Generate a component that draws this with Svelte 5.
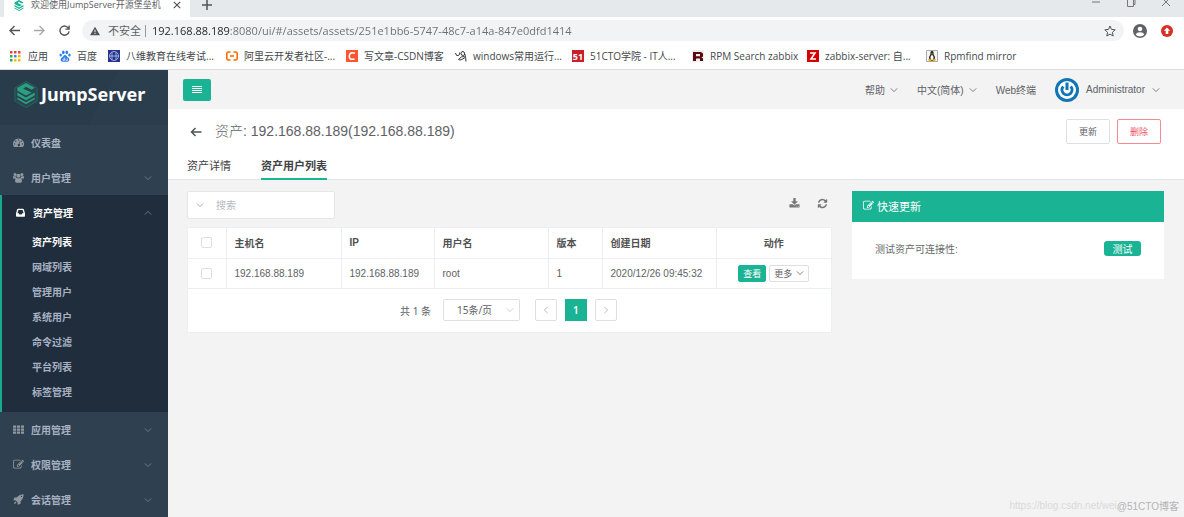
<script lang="ts">
    const address =
        "192.168.88.189:8080/ui/#/assets/assets/251e1bb6-5747-48c7-a14a-847e0dfd1414";

    const bookmarks = [
        { icon: "apps", label: "应用" },
        { icon: "baidu", label: "百度" },
        { icon: "school", label: "八维教育在线考试..." },
        { icon: "aliyun", label: "阿里云开发者社区-..." },
        { icon: "csdn", label: "写文章-CSDN博客" },
        { icon: "scribble", label: "windows常用运行..." },
        { icon: "cto", label: "51CTO学院 - IT人..." },
        { icon: "rpm", label: "RPM Search zabbix" },
        { icon: "zabbix", label: "zabbix-server: 自..." },
        { icon: "tux", label: "Rpmfind mirror" },
    ];

    const menu = [
        { icon: "dashboard", label: "仪表盘" },
        { icon: "users", label: "用户管理", expandable: true },
        {
            icon: "inbox",
            label: "资产管理",
            expandable: true,
            children: [
                "资产列表",
                "网域列表",
                "管理用户",
                "系统用户",
                "命令过滤",
                "平台列表",
                "标签管理",
            ],
        },
        { icon: "grid", label: "应用管理", expandable: true },
        { icon: "edit", label: "权限管理", expandable: true },
        { icon: "rocket", label: "会话管理", expandable: true },
    ];

    const assetUsers = [
        {
            hostname: "192.168.88.189",
            ip: "192.168.88.189",
            username: "root",
            version: 1,
            created: "2020/12/26 09:45:32",
        },
    ];

    let activeChild = $state("资产列表");
    let search = $state("");
    let pageSize = $state("15");
    let url = $state(address);
</script>

{#snippet chevron(dir: string)}
    <svg class="chevron {dir}" viewBox="0 0 10 10" aria-hidden="true">
        <path d="M1 3l4 4 4-4" />
    </svg>
{/snippet}

{#snippet layers()}
    <path d="M3 7l9-5 9 5-3 2-6-3-3 2 9 4-6 3-9-5z" />
    <path d="M3 12l9 5 9-5v3l-9 5-9-5z" />
    <path d="M3 17l9 5 9-5v2l-9 5-9-5z" />
{/snippet}

{#snippet icon(name: string)}
    {#if name === "edit"}
        <svg class="icon" viewBox="0 0 1792 1792" aria-hidden="true">
            <path
                d="M888 1184l116-116-152-152-116 116v56h96v96h56zm440-720q-16-16-33 1l-350 350q-17 17-1 33t33-1l350-350q17-17 1-33zm80 594v190q0 119-84.5 203.5t-203.5 84.5h-832q-119 0-203.5-84.5t-84.5-203.5v-832q0-119 84.5-203.5t203.5-84.5h832q63 0 117 25 15 7 18 23 3 17-9 29l-49 49q-14 14-32 8-23-6-45-6h-832q-66 0-113 47t-47 113v832q0 66 47 113t113 47h832q66 0 113-47t47-113v-126q0-13 9-22l64-64q15-15 35-7t20 29zm-96-738l288 288-672 672h-288v-288zm444 132l-92 92-288-288 92-92q28-28 68-28t68 28l152 152q28 28 28 68t-28 68z"
            />
        </svg>
    {:else if name === "refresh"}
        <svg class="icon" viewBox="0 0 1792 1792" aria-hidden="true">
            <path
                d="M1639 1056q0 5-1 7-64 268-268 434.5t-478 166.5q-146 0-282.5-55t-243.5-157l-129 129q-19 19-45 19t-45-19-19-45v-448q0-26 19-45t45-19h448q26 0 45 19t19 45-19 45l-137 137q71 66 161 102t187 36q134 0 250-65t186-179q11-17 53-117 8-23 30-23h192q13 0 22.5 9.5t9.5 22.5zm25-800v448q0 26-19 45t-45 19h-448q-26 0-45-19t-19-45 19-45l138-138q-148-137-349-137-134 0-250 65t-186 179q-11 17-53 117-8 23-30 23h-199q-13 0-22.5-9.5t-9.5-22.5v-7q65-268 270-434.5t480-166.5q146 0 284 55.5t245 156.5l130-129q19-19 45-19t45 19 19 45z"
            />
        </svg>
    {:else if name === "download"}
        <svg class="icon" viewBox="0 0 1792 1792" aria-hidden="true">
            <path
                d="M1344 1344q0-26-19-45t-45-19-45 19-19 45 19 45 45 19 45-19 19-45zm256 0q0-26-19-45t-45-19-45 19-19 45 19 45 45 19 45-19 19-45zm128-224v320q0 40-28 68t-68 28h-1472q-40 0-68-28t-28-68v-320q0-40 28-68t68-28h465l135 136q58 56 136 56t136-56l136-136h464q40 0 68 28t28 68zm-325-569q17 41-14 70l-448 448q-18 19-45 19t-45-19l-448-448q-31-29-14-70 17-39 59-39h256v-448q0-26 19-45t45-19h256q26 0 45 19t19 45v448h256q42 0 59 39z"
            />
        </svg>
    {:else if name === "dashboard"}
        <svg class="icon" viewBox="0 0 16 16" aria-hidden="true">
            <path
                fill-rule="evenodd"
                d="M8 2a8 8 0 0 0-6.800 12.200q.3.300.700.300h12.200q.4 0 .7-.3A8 8 0 0 0 8 2zM8 3.200a1 1 0 1 1 0 2 1 1 0 0 1 0-2zM4 5a1 1 0 1 1 0 2 1 1 0 0 1 0-2zM12 5a1 1 0 1 1 0 2 1 1 0 0 1 0-2zM2.300 9a1 1 0 1 1 0 2 1 1 0 0 1 0-2zM13.700 9a1 1 0 1 1 0 2 1 1 0 0 1 0-2zM9.300 6.400l.9.300-1 3.500a1.700 1.700 0 1 1-.9-.2z"
            />
        </svg>
    {:else if name === "users"}
        <svg class="icon" viewBox="0 0 16 16" aria-hidden="true">
            <circle cx="3" cy="3.500" r="2.200" />
            <circle cx="13" cy="3.500" r="2.200" />
            <circle cx="8" cy="5.500" r="3" />
            <path
                d="M0 9.500V7.500q0-2 1.500-1.500L4.500 6.500Q4 8 5 9.500zM16 9.500V7.500q0-2-1.500-1.500l-3 .5Q12 8 11 9.500zM3 13.500q0-5 2.500-5Q8 10.500 10.500 8.500 13 8.500 13 13.500q0 2-2 2H5q-2 0-2-2z"
            />
        </svg>
    {:else if name === "inbox"}
        <svg class="icon" viewBox="0 0 16 16" aria-hidden="true">
            <path
                fill-rule="evenodd"
                d="M4.500 2.500h7q1 0 1.300.7L14.500 9v4q0 1-1 1h-11q-1 0-1-1V9l1.700-5.800q.3-.7 1.300-.7zM5 4.500L3.500 9h2l1 2h3l1-2h2L11 4.500z"
            />
        </svg>
    {:else if name === "grid"}
        <svg class="icon" viewBox="0 0 16 16" aria-hidden="true">
            <path
                d="M0 2h4.500v3.300H0zM5.700 2h4.500v3.300H5.700zM11.500 2H16v3.300h-4.500zM0 6.400h4.500v3.300H0zM5.700 6.400h4.500v3.300H5.700zM11.500 6.400H16v3.300h-4.500zM0 10.800h4.500v3.300H0zM5.700 10.800h4.500v3.300H5.700zM11.500 10.800H16v3.300h-4.500z"
            />
        </svg>
    {:else if name === "rocket"}
        <svg class="icon" viewBox="0 0 16 16" aria-hidden="true">
            <path
                fill-rule="evenodd"
                d="M15.500.500q0 6-4.500 10v3.500L7 15.500 6.500 12 4 9.500.500 9 2 5h3.500Q9.500.500 15.500.500zM12.500 2.500a1 1 0 1 0 0 2 1 1 0 0 0 0-2zM3.500 11l1.500 1.500Q4 14.500 1.500 14.500 1.500 12 3.500 11z"
            />
        </svg>
    {/if}
{/snippet}

{#snippet favicon(name: string)}
    <svg class="favicon" viewBox="0 0 12 12" aria-hidden="true">
        {#if name === "apps"}
            <path fill="#ea4335" d="M0 1h2.500v2.500H0zM4 1h2.500v2.500H4zM8 1h2.500v2.500H8z" />
            <path fill="#34a853" d="M0 5h2.500v2.500H0zM0 9h2.500v2.500H0z" />
            <path fill="#4285f4" d="M4 5h2.500v2.500H4z" />
            <path fill="#fbbc05" d="M8 5h2.500v2.500H8zM4 9h2.500v2.500H4zM8 9h2.500v2.500H8z" />
        {:else if name === "baidu"}
            <g fill="#2f7de8">
                <ellipse cx="4.300" cy="2.300" rx="1.300" ry="1.900" />
                <ellipse cx="7.800" cy="2.300" rx="1.300" ry="1.900" />
                <ellipse cx="1.700" cy="5" rx="1.200" ry="1.600" />
                <ellipse cx="10.400" cy="5" rx="1.200" ry="1.600" />
                <path
                    d="M6 5C4.500 5 4.500 6.500 3 7.500 0.800 9 1.500 12 4 11.700h4C10.500 12 11.200 9 9 7.500 7.500 6.500 7.500 5 6 5z"
                />
            </g>
            <path
                fill="none"
                stroke="#fff"
                stroke-width=".6"
                d="M5.500 7.500v3h-1.500v-1.500h1.500M7 8.500v2h1.500v-2"
            />
        {:else if name === "school"}
            <path fill="#26358c" d="M0 0h12v12H0z" />
            <g fill="none" stroke="#b9c3ef" stroke-width=".8">
                <circle cx="6" cy="6" r="4.500" />
                <path d="M4 2v8M8 2v8M1.500 6h9" />
            </g>
        {:else if name === "aliyun"}
            <path
                fill="none"
                stroke="#ff6a00"
                stroke-width="1.600"
                d="M4.500 2H2.500Q.8 2 .8 3.500v5Q.8 10 2.500 10h2M7.500 2h2q1.700 0 1.700 1.500v5Q11.200 10 9.500 10h-2M4 6h4"
            />
        {:else if name === "csdn"}
            <path fill="#fc5531" d="M0 0h12v12H0z" />
            <path
                fill="none"
                stroke="#fff"
                stroke-width="1.600"
                d="M9 3.300Q4 1.500 3.300 6 3 10.500 8.600 8.900"
            />
        {:else if name === "scribble"}
            <path
                fill="none"
                stroke="#333"
                d="M.5 3Q1 6.500 3.500 5.500 5.500 4 4.500 2.500M11 11.500Q10.800 7 9.800 4 9.500 1 7 1.500 5 3 6.500 5q2.500 1.500 3.300-1M9.500 6.500Q6 6 3.500 9.500q2 1.500 6.500-2"
            />
        {:else if name === "cto"}
            <path fill="#c8202b" d="M0 0h12v12H0z" />
            <text x="6" y="10" text-anchor="middle" fill="#fff">51</text>
        {:else if name === "rpm"}
            <path fill="#eee" d="M0 0h12v12H0z" />
            <path
                fill="#5c0a12"
                fill-rule="evenodd"
                d="M1 2h8l2 1.500v3L9.500 7.500 11 8.500V11H8V8.500H4V11H1zM4 4v2.300h4V4z"
            />
        {:else if name === "zabbix"}
            <path fill="#d40000" d="M0 0h12v12H0z" />
            <path fill="none" stroke="#fff" stroke-width="1.600" d="M3 3h5L4 9h5" />
        {:else}
            <path fill="#f4f4f4" stroke="#aaa" d="M.5.500h11v11H.5z" />
            <path fill="#222" d="M6 1Q4 1 4.500 4 2.500 7 3 9.500l3 1.500 3-1.500Q9.500 7 7.500 4 8 1 6 1z" />
            <ellipse cx="6" cy="7.500" rx="1.500" ry="2.500" fill="#fff" />
            <path
                fill="#f3b21b"
                d="M5 3.500h2L6 4.800zM1.800 9.500L4 8.500l1.500 2-2 1zM10.200 9.500L8 8.500l-1.500 2 2 1z"
            />
        {/if}
    </svg>
{/snippet}

<div class="window">
    <header class="browser">
        <div class="tab-strip">
            <div class="tab">
                <svg class="tab-logo" viewBox="0 0 24 24" aria-hidden="true">
                    {@render layers()}
                </svg>
                <span class="tab-title">欢迎使用JumpServer开源堡垒机</span>
                <button class="bare" aria-label="关闭标签页">
                    <svg class="line-icon small" viewBox="0 0 10 10"><path d="M1 1l8 8M9 1L1 9" /></svg>
                </button>
            </div>
            <button class="bare new-tab" aria-label="新标签页">
                <svg class="line-icon" viewBox="0 0 10 10"><path d="M5 0v10M0 5h10" /></svg>
            </button>
            <div class="window-controls">
                <button class="bare" aria-label="最小化">
                    <svg class="line-icon thin" viewBox="0 0 10 10"><path d="M1 5h8" /></svg>
                </button>
                <button class="bare" aria-label="还原">
                    <svg class="line-icon thin" viewBox="0 0 10 10"><path d="M1.500 2.500h6v7h-6zM3 2.500v-2h6v7H7.500" /></svg>
                </button>
                <button class="bare" aria-label="关闭">
                    <svg class="line-icon thin" viewBox="0 0 10 10"><path d="M1 1l8 8M9 1L1 9" /></svg>
                </button>
            </div>
        </div>

        <div class="toolbar">
            <button class="bare" aria-label="后退">
                <svg class="line-icon nav" viewBox="0 0 12 12"><path d="M12 6H1.500M6 1L1 6l5 5" /></svg>
            </button>
            <button class="bare" aria-label="前进" disabled>
                <svg class="line-icon nav" viewBox="0 0 12 12"><path d="M0 6h10.500M6 1l5 5-5 5" /></svg>
            </button>
            <button class="bare" aria-label="刷新">
                <svg class="line-icon nav" viewBox="0 0 12 12"><path d="M10.500 3.800A5 5 0 1 0 11 7M11 .5v4H7" /></svg>
            </button>
            <div class="omnibox">
                <svg class="warning" viewBox="0 0 12 12" aria-hidden="true">
                    <path fill-rule="evenodd" d="M6 1l6 10H0zM5.400 4.500v3h1.200v-3zM5.400 8.500v1.200h1.200V8.500z" />
                </svg>
                <span class="insecure">不安全</span>
                <input class="address" type="text" aria-label="地址" bind:value={url} />
                <button class="bare" aria-label="收藏">
                    <svg class="line-icon star" viewBox="0 0 12 12">
                        <path d="M6 1l1.500 3.400 3.700.4-2.800 2.500.8 3.700L6 9.100 2.800 11l.8-3.700L.8 4.800l3.700-.4z" />
                    </svg>
                </button>
            </div>
            <button class="bare" aria-label="用户">
                <svg class="profile" viewBox="0 0 14 14">
                    <circle cx="7" cy="7" r="7" fill="#5f6368" />
                    <circle cx="7" cy="5" r="2.300" fill="#fff" />
                    <path fill="#fff" d="M2.600 10.500Q3.500 8.300 7 8.300t4.400 2.200Q9.500 12.500 7 12.500t-4.400-2z" />
                </svg>
            </button>
            <button class="bare" aria-label="更新浏览器">
                <svg class="update" viewBox="0 0 12 12">
                    <circle cx="6" cy="6" r="6" fill="#d93025" />
                    <path fill="#fff" d="M6 2.500l3.200 3.300H7.300V9H4.700V5.800H2.800z" />
                </svg>
            </button>
        </div>

        <nav class="bookmarks">
            {#each bookmarks as bookmark}
                <a href="#{bookmark.icon}">
                    {@render favicon(bookmark.icon)}
                    <span>{bookmark.label}</span>
                </a>
            {/each}
        </nav>
    </header>

    <div class="app">
        <aside class="sidebar">
            <div class="brand">
                <svg class="brand-logo" viewBox="0 0 24 28" aria-hidden="true">
                    <path class="hexagon" d="M12 .5l11.500 6.700v13.600L12 27.500.5 20.800V7.200z" />
                    {@render layers()}
                </svg>
                <span>JumpServer</span>
            </div>
            <nav>
                {#each menu as item}
                    <div class="menu-group" class:open={item.children}>
                        <a class="menu-item" href="#{item.icon}">
                            {@render icon(item.icon)}
                            <span>{item.label}</span>
                            {#if item.expandable}
                                {@render chevron(item.children ? "up" : "down")}
                            {/if}
                        </a>
                        {#if item.children}
                            <ul>
                                {#each item.children as child}
                                    <li>
                                        <a
                                            href="#{child}"
                                            class:active={child === activeChild}
                                            onclick={() => (activeChild = child)}>{child}</a
                                        >
                                    </li>
                                {/each}
                            </ul>
                        {/if}
                    </div>
                {/each}
            </nav>
        </aside>

        <main>
            <div class="navbar">
                <button class="hamburger" aria-label="折叠菜单">
                    <svg viewBox="0 0 10 8"><path d="M0 0h10v1H0zM0 2h10v1H0zM0 4h10v1H0zM0 6h10v1H0z" /></svg>
                </button>
                <div class="navbar-right">
                    <button class="bare">帮助 {@render chevron("down")}</button>
                    <button class="bare">中文(简体) {@render chevron("down")}</button>
                    <a href="#terminal">Web终端</a>
                    <button class="bare account">
                        <svg class="avatar" viewBox="0 0 24 24" aria-hidden="true">
                            <circle cx="12" cy="12" r="12" fill="#0f75b5" />
                            <circle cx="12" cy="12" r="9" fill="#fff" />
                            <path d="M8.300 8.500A5 5 0 1 0 15.700 8.500M12 4.500v7.500" />
                        </svg>
                        Administrator {@render chevron("down")}
                    </button>
                </div>
            </div>

            <div class="page-head">
                <div class="title-row">
                    <button class="bare" aria-label="返回">
                        <svg class="line-icon back" viewBox="0 0 12 12"><path d="M11.500 6H1.500M5.500 2l-4 4 4 4" /></svg>
                    </button>
                    <h1><span>资产:</span> 192.168.88.189(192.168.88.189)</h1>
                    <button class="btn">更新</button>
                    <button class="btn danger">删除</button>
                </div>
                <nav class="tabs">
                    <a href="#detail">资产详情</a>
                    <a href="#users" class="active">资产用户列表</a>
                </nav>
            </div>

            <div class="content">
                <section>
                    <div class="table-tools">
                        <label class="search">
                            {@render chevron("down")}
                            <input type="text" placeholder="搜索" aria-label="搜索" bind:value={search} />
                        </label>
                        <button class="bare" aria-label="导出">{@render icon("download")}</button>
                        <button class="bare" aria-label="刷新列表">{@render icon("refresh")}</button>
                    </div>

                    <div class="card">
                        <table>
                            <colgroup>
                                <col class="col-check" />
                                <col class="col-host" />
                                <col class="col-ip" />
                                <col class="col-wide" />
                                <col class="col-version" />
                                <col class="col-wide" />
                                <col class="col-host" />
                            </colgroup>
                            <thead>
                                <tr>
                                    <th class="center"><input type="checkbox" aria-label="全选" /></th>
                                    <th>主机名</th>
                                    <th>IP</th>
                                    <th>用户名</th>
                                    <th>版本</th>
                                    <th>创建日期</th>
                                    <th class="center">动作</th>
                                </tr>
                            </thead>
                            <tbody>
                                {#each assetUsers as row}
                                    <tr>
                                        <td class="center"><input type="checkbox" aria-label="选择 {row.hostname}" /></td>
                                        <td>{row.hostname}</td>
                                        <td>{row.ip}</td>
                                        <td>{row.username}</td>
                                        <td>{row.version}</td>
                                        <td>{row.created}</td>
                                        <td>
                                            <div class="actions">
                                                <button class="btn-mini primary">查看</button>
                                                <button class="btn-mini">更多 {@render chevron("down")}</button>
                                            </div>
                                        </td>
                                    </tr>
                                {/each}
                            </tbody>
                        </table>

                        <div class="pagination">
                            <span>共 1 条</span>
                            <div class="page-size">
                                <select aria-label="每页条数" bind:value={pageSize}>
                                    <option value="15">15条/页</option>
                                    <option value="25">25条/页</option>
                                    <option value="50">50条/页</option>
                                </select>
                                {@render chevron("down")}
                            </div>
                            <div class="pager">
                                <button aria-label="上一页">{@render chevron("left")}</button>
                                <button class="current">1</button>
                                <button aria-label="下一页">{@render chevron("right")}</button>
                            </div>
                        </div>
                    </div>
                </section>

                <section class="quick">
                    <h2>{@render icon("edit")}快速更新</h2>
                    <div class="quick-row">
                        <span>测试资产可连接性:</span>
                        <button>测试</button>
                    </div>
                </section>
            </div>
        </main>
    </div>

    <div class="watermark">
        <span>https://blog.csdn.net/wei</span><span class="owner">@51CTO博客</span>
    </div>
</div>

<style>
    :global(body) {
        margin: 0;
    }

    .window {
        position: relative;
        display: flex;
        flex-direction: column;
        height: 100vh;
        overflow: hidden;
        font-family: "Liberation Sans", "Noto Sans CJK SC", sans-serif;
        font-size: 10px;
        color: #606266;
        background: #f3f3f4;
    }

    .window * {
        box-sizing: border-box;
    }

    button,
    input,
    select {
        font: inherit;
        color: inherit;
    }

    button {
        display: flex;
        align-items: center;
        justify-content: center;
        cursor: pointer;
    }

    a {
        color: inherit;
        text-decoration: none;
    }

    svg {
        display: block;
        flex: none;
    }

    .bare {
        padding: 0;
        border: 0;
        background: none;
    }

    .icon {
        width: 11px;
        height: 11px;
        fill: currentColor;
    }

    .chevron {
        width: 8px;
        height: 8px;
        fill: none;
        stroke: currentColor;
    }

    .chevron.up {
        transform: rotate(180deg);
    }

    .chevron.left {
        transform: rotate(90deg);
    }

    .chevron.right {
        transform: rotate(-90deg);
    }

    .line-icon {
        width: 10px;
        height: 10px;
        fill: none;
        stroke: #505458;
        stroke-width: 1.5;
    }

    .line-icon.small {
        width: 8px;
        height: 8px;
    }

    .line-icon.thin {
        stroke: #777;
        stroke-width: 1;
    }

    .line-icon.nav {
        width: 11px;
        height: 11px;
    }

    .line-icon.back {
        width: 12px;
        height: 12px;
    }

    .line-icon.star {
        width: 12px;
        height: 12px;
        stroke-width: 1;
    }

    /* browser chrome */
    .browser {
        flex: none;
        font-family: "Open Sans", "Noto Sans CJK SC", sans-serif;
        background: #fff;
        border-bottom: 1px solid #dcdde0;
    }

    .tab-strip {
        display: flex;
        height: 25px;
        margin-top: -8px;
        padding-left: 4px;
        background: #e6e9ec;
    }

    .tab {
        display: flex;
        align-items: center;
        gap: 6px;
        width: 186px;
        padding: 0 9px;
        background: #fff;
    }

    .tab-logo {
        width: 12px;
        height: 12px;
        fill: #1ab394;
    }

    .tab-title {
        flex: 1;
        font-size: 9px;
        white-space: nowrap;
    }

    .new-tab {
        margin-left: 12px;
    }

    .window-controls {
        display: flex;
        gap: 25px;
        height: 20px;
        margin-left: auto;
        padding-right: 13px;
    }

    .toolbar {
        display: flex;
        align-items: center;
        gap: 14px;
        height: 27px;
        padding: 0 11px 0 9px;
    }

    .toolbar button:disabled {
        opacity: 0.5;
    }

    .omnibox {
        flex: 1;
        display: flex;
        align-items: center;
        height: 21px;
        margin: 0 -5px 0 -2px;
        padding: 0 8px;
        border-radius: 11px;
        background: #f1f3f4;
    }

    .warning {
        width: 10px;
        height: 10px;
        fill: #505458;
    }

    .insecure {
        margin-left: 8px;
        padding-right: 4px;
        border-right: 1px solid #999;
        font-size: 11px;
        line-height: 12px;
    }

    /* the host part reads darker than the rest of the address */
    .address {
        flex: 1;
        min-width: 0;
        padding: 0 0 0 6px;
        border: 0;
        outline: none;
        font-size: 11px;
        color: transparent;
        background: linear-gradient(90deg, #202124 84px, #6a6e73 84px);
        background-clip: text;
    }

    .profile {
        width: 14px;
        height: 14px;
    }

    .update {
        width: 12px;
        height: 12px;
    }

    .bookmarks {
        display: grid;
        grid-template-columns: 49px 49px 118px 120px 109px 117px 120px 115px 119px auto;
        align-items: center;
        height: 25px;
        padding: 0 0 2px 10px;
    }

    .bookmarks a {
        display: flex;
        align-items: center;
        gap: 6px;
        white-space: nowrap;
        color: #45484c;
    }

    .favicon {
        width: 12px;
        height: 12px;
    }

    .favicon text {
        font-size: 9px;
        font-weight: 700;
    }

    /* sidebar */
    .app {
        flex: 1;
        display: flex;
        min-height: 0;
    }

    .sidebar {
        flex: none;
        width: 168px;
        overflow: hidden;
        color: #a7b1c2;
        background: #2f4050;
    }

    .brand {
        display: flex;
        align-items: center;
        gap: 3px;
        height: 55px;
        padding: 0 0 7px 14px;
        font-family: "Noto Sans", sans-serif;
        font-size: 18px;
        font-weight: 700;
        color: #fff;
        background: linear-gradient(120deg, #293c4b 60%, #2b3e4d 60%);
    }

    .brand-logo {
        width: 24px;
        height: 27px;
        fill: #2c9f83;
    }

    .hexagon {
        fill: #26474d;
        stroke: #2b6660;
    }

    .menu-item {
        display: flex;
        align-items: center;
        gap: 7px;
        height: 35px;
        padding: 0 16px 0 13px;
        font-weight: 600;
    }

    .menu-item .icon {
        color: #92989f;
    }

    .menu-item .chevron {
        margin-left: auto;
        color: #7b8894;
    }

    .menu-group.open {
        padding-bottom: 7px;
        border-left: 2px solid #19aa8d;
        background: #1f2d3d;
    }

    .open .menu-item,
    .open .menu-item .icon {
        color: #fff;
    }

    ul {
        margin: 0;
        padding: 0 0 0 30px;
        list-style: none;
        line-height: 25px;
        font-weight: 600;
    }

    ul a {
        display: block;
    }

    ul a.active {
        color: #fff;
    }

    /* main column */
    main {
        flex: 1;
        min-width: 0;
    }

    .navbar {
        display: flex;
        align-items: center;
        justify-content: space-between;
        height: 39px;
        padding: 0 24px 0 15px;
    }

    .hamburger {
        width: 28px;
        height: 22px;
        padding: 0;
        border: 0;
        border-radius: 2px;
        background: #1ab394;
    }

    .hamburger svg {
        width: 10px;
        height: 8px;
        fill: #fff;
    }

    .navbar-right {
        display: flex;
        align-items: center;
        gap: 19px;
    }

    .navbar-right button {
        gap: 5px;
    }

    .navbar-right .account {
        gap: 7px;
    }

    .avatar {
        width: 24px;
        height: 24px;
    }

    .avatar path {
        fill: none;
        stroke: #0f75b5;
        stroke-width: 3;
    }

    .page-head {
        height: 71px;
        padding: 0 23px 0 19px;
        border-bottom: 1px solid #dfe4ed;
        background: #fff;
    }

    .title-row {
        display: flex;
        align-items: center;
        gap: 7px;
        height: 45px;
        padding-left: 3px;
    }

    h1 {
        flex: 1;
        margin: 0 0 0 6px;
        padding-bottom: 3px;
        font-size: 14px;
        font-weight: 400;
    }

    h1 span {
        font-weight: 300;
    }

    .btn {
        width: 44px;
        height: 25px;
        padding: 0;
        border: 1px solid #dcdfe6;
        border-radius: 2px;
        background: #fff;
        font-size: 9px;
    }

    .btn.danger {
        border-color: #f58a95;
        color: #ed5565;
    }

    .tabs {
        display: flex;
        gap: 30px;
        font-size: 11px;
        line-height: 24px;
        color: #404245;
    }

    .tabs a {
        border-bottom: 2px solid transparent;
    }

    .tabs a.active {
        border-color: #1ab394;
        font-weight: 600;
    }

    .content {
        display: grid;
        grid-template-columns: minmax(0, 645fr) minmax(0, 312fr);
        align-items: start;
        gap: 20px;
        padding: 11px 20px 0 19px;
    }

    .table-tools {
        display: flex;
        align-items: center;
        gap: 17px;
        margin-bottom: 8px;
        padding-right: 4px;
        color: #777;
    }

    .table-tools button {
        padding-bottom: 4px;
    }

    .search {
        display: flex;
        align-items: center;
        gap: 12px;
        width: 148px;
        height: 28px;
        margin-right: auto;
        padding: 0 8px;
        border: 1px solid #e5e6e7;
        border-radius: 2px;
        background: #fff;
        color: #999;
    }

    .search input {
        width: 100%;
        padding: 0;
        border: 0;
        outline: none;
    }

    .search input::placeholder {
        color: #b5b8bf;
    }

    .card {
        background: #fff;
        border: 1px solid #ebeef5;
    }

    table {
        width: 100%;
        table-layout: fixed;
        border-collapse: collapse;
    }

    .col-check {
        width: 38px;
    }

    .col-host {
        width: 115px;
    }

    .col-ip {
        width: 93px;
    }

    .col-wide {
        width: 114px;
    }

    .col-version {
        width: 54px;
    }

    th,
    td {
        height: 30px;
        padding: 0 8px;
        border-right: 1px solid #ebeef5;
        border-bottom: 1px solid #ebeef5;
        text-align: left;
        white-space: nowrap;
    }

    th:last-child,
    td:last-child {
        border-right: 0;
    }

    th {
        font-weight: 600;
        color: #515151;
    }

    th.center,
    td.center {
        text-align: center;
    }

    input[type="checkbox"] {
        appearance: none;
        display: block;
        width: 11px;
        height: 11px;
        margin: 0 auto;
        border: 1px solid #dcdfe6;
        border-radius: 2px;
        background: #fff;
    }

    input[type="checkbox"]:checked {
        background: #1ab394;
    }

    .actions {
        display: flex;
        justify-content: center;
        gap: 3px;
    }

    .btn-mini {
        gap: 4px;
        height: 17px;
        padding: 0 4px;
        border: 1px solid #dcdfe6;
        border-radius: 2px;
        background: #fff;
        font-size: 9px;
    }

    .btn-mini.primary {
        border-color: #1ab394;
        background: #1ab394;
        color: #fff;
    }

    .pagination {
        display: flex;
        align-items: center;
        justify-content: center;
        height: 43px;
        padding-right: 2px;
        font-family: "Noto Sans", "Noto Sans CJK SC", sans-serif;
    }

    .page-size {
        display: flex;
        align-items: center;
        margin: 0 15px 0 12px;
        color: #c0c4cc;
    }

    .page-size select {
        appearance: none;
        width: 77px;
        height: 22px;
        margin-right: -14px;
        padding: 0 13px;
        border: 1px solid #dcdfe6;
        border-radius: 2px;
        background: none;
        color: #606266;
    }

    .page-size .chevron {
        margin-right: 6px;
        pointer-events: none;
    }

    .pager {
        display: flex;
        gap: 8px;
    }

    .pager button {
        width: 22px;
        height: 22px;
        padding: 0;
        border: 1px solid #dcdfe6;
        border-radius: 2px;
        background: #fff;
        color: #a5a9b0;
    }

    .pager button.current {
        border-color: #1ab394;
        border-radius: 0;
        background: #1ab394;
        color: #fff;
        font-weight: 600;
    }

    .quick {
        background: #fff;
    }

    h2 {
        display: flex;
        align-items: center;
        gap: 3px;
        height: 31px;
        margin: 0;
        padding: 0 0 2px 11px;
        font-size: 11px;
        font-weight: 400;
        color: #fff;
        background: #1ab394;
    }

    .quick-row {
        display: flex;
        align-items: center;
        justify-content: space-between;
        padding: 19px 23px 23px;
        color: #676a6c;
    }

    .quick-row button {
        width: 37px;
        height: 15px;
        padding: 0;
        border: 0;
        border-radius: 3px;
        background: #1ab394;
        color: #fff;
    }

    .watermark {
        position: absolute;
        right: 5px;
        bottom: 4px;
        display: flex;
        align-items: center;
        color: #d9dadb;
    }

    .watermark .owner {
        color: #b3b4b6;
    }
</style>
